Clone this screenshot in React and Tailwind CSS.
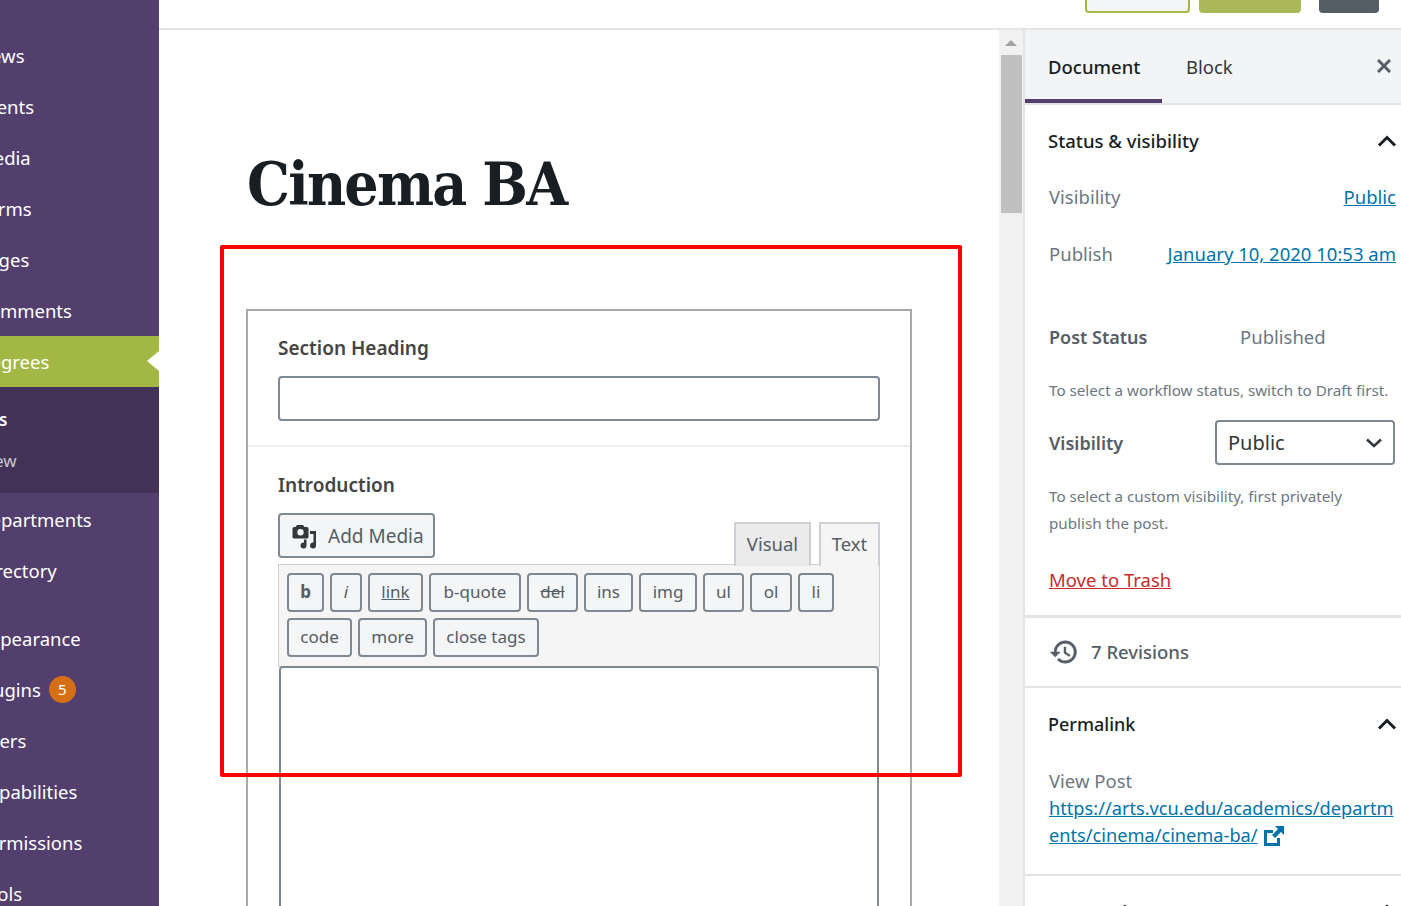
import React from 'react';

const menuTop = ['News', 'Events', 'Media', 'Forms', 'Pages', 'Comments'];
const menuMid = ['Departments', 'Directory'];
const menuBottom = ['Users', 'Capabilities', 'Permissions', 'Tools'];

const row1 = [
  { label: 'b', w: 'w-[37px]', cls: 'font-bold' },
  { label: 'i', w: 'w-[32px]', cls: 'italic' },
  { label: 'link', w: 'w-[55px]', cls: 'underline' },
  { label: 'b-quote', w: 'w-[92px]', cls: '' },
  { label: 'del', w: 'w-[51px]', cls: 'line-through' },
  { label: 'ins', w: 'w-[49px]', cls: '' },
  { label: 'img', w: 'w-[58px]', cls: '' },
  { label: 'ul', w: 'w-[41px]', cls: '' },
  { label: 'ol', w: 'w-[42px]', cls: '' },
  { label: 'li', w: 'w-[36px]', cls: '' },
];
const row2 = [
  { label: 'code', w: 'w-[65px]', cls: '' },
  { label: 'more', w: 'w-[69px]', cls: '' },
  { label: 'close tags', w: 'w-[106px]', cls: '' },
];

const MenuItem = ({ label, children }) => (
  <div className="h-[51px] flex items-center -ml-[23px] text-white text-[18.5px] whitespace-nowrap">
    {label}
    {children}
  </div>
);

const QtButton = ({ label, w, cls }) => (
  <button className={`${w} h-[39px] pb-[1px] border-2 border-[#7e8993] rounded-[4px] bg-[#f3f5f6] text-[17px] text-[#555d66] flex items-center justify-center ${cls}`}>
    {label}
  </button>
);

const Chevron = () => (
  <svg width="20" height="12" viewBox="0 0 20 12" fill="none" stroke="#191e23" strokeWidth="3">
    <path d="M2 10.5 L10 2.5 L18 10.5" />
  </svg>
);

export default function App() {
  return (
    <div className="w-[1401px] h-[906px] overflow-hidden relative flex bg-white font-['Noto_Sans','Open_Sans',sans-serif]">
      {/* admin menu */}
      <aside className="w-[159px] shrink-0 bg-[#523f6d] overflow-hidden pt-[30px]">
        {menuTop.map((m) => <MenuItem key={m} label={m} />)}
        <div className="relative h-[51px] bg-[#a3b745] flex items-center text-white text-[18.5px] whitespace-nowrap">
          <span className="-ml-[23px]">Degrees</span>
          <span className="absolute right-0 top-[15px] border-y-[10px] border-r-[12px] border-y-transparent border-r-white" />
        </div>
        <div className="h-[106px] bg-[#413256] pt-[19px] text-[17px] whitespace-nowrap">
          <div className="-ml-[61px] h-[28px] leading-[28px] font-semibold text-white">Degrees</div>
          <div className="-ml-[55px] mt-[13px] h-[28px] leading-[28px] text-[#cbc5d3]">Add New</div>
        </div>
        <div className="pt-[1px]">
          {menuMid.map((m) => <MenuItem key={m} label={m} />)}
        </div>
        <div className="pt-[17px]">
          <MenuItem label="Appearance" />
          <MenuItem label="Plugins">
            <span className="ml-[8px] w-[27px] h-[27px] rounded-full bg-[#d46f15] text-[15px] flex items-center justify-center">5</span>
          </MenuItem>
          {menuBottom.map((m) => <MenuItem key={m} label={m} />)}
        </div>
      </aside>

      <div className="flex-1 min-w-0 flex flex-col">
        {/* top bar */}
        <header className="h-[30px] shrink-0 border-b-2 border-[#e2e4e7] flex justify-end items-start pr-[22px]">
          <div className="-mt-[10px] w-[105px] h-[23px] border-2 border-[#a3b745] rounded-[4px] bg-[#f3f5f6]" />
          <div className="-mt-[10px] ml-[9px] w-[102px] h-[23px] rounded-[4px] bg-[#a9b758]" />
          <div className="-mt-[10px] ml-[18px] w-[60px] h-[23px] rounded-[4px] bg-[#555d66]" />
        </header>

        <div className="flex-1 min-h-0 flex">
          {/* editor */}
          <main className="w-[840px] shrink-0 overflow-hidden pl-[87px]">
            <h1 className="ml-[1px] mt-[118px] h-[72px] leading-[72px] text-[60px] font-bold text-[#191e23] tracking-[-1.8px] font-['DejaVu_Serif_Condensed','DejaVu_Serif',serif] whitespace-nowrap">
              Cinema BA
            </h1>
            <div className="mt-[89px] w-[666px] h-[700px] border-2 border-[#a8aba7] border-b-0">
              <div className="h-[136px] border-b-2 border-[#eeeeee] px-[30px] pt-[22px]">
                <label className="block h-[30px] leading-[30px] text-[19px] font-semibold text-[#444444]">Section Heading</label>
                <div className="mt-[13px] h-[45px] border-2 border-[#7e8993] rounded-[4px]" />
              </div>
              <div className="px-[30px] pt-[23px]">
                <label className="block h-[30px] leading-[30px] text-[19px] font-semibold text-[#444444]">Introduction</label>
                <div className="mt-[13px] h-[51px] flex justify-between items-start">
                  <button className="w-[157px] h-[45px] border-2 border-[#7e8993] rounded-[4px] bg-[#f3f5f6] flex items-center pl-[11px] gap-[11px] text-[19px] text-[#555d66]">
                    <svg width="26" height="26" viewBox="0 0 26 26" fill="#32373c">
                      <path d="M6 2h6l1.5 2H16a1.5 1.5 0 0 1 1.5 1.5V14a1.5 1.5 0 0 1-1.500 1.500H3A1.500 1.500 0 0 1 1.500 14V5.500A1.500 1.500 0 0 1 3 4h1.500zM9.500 6a3.200 3.200 0 1 0 0 6.400 3.200 3.200 0 0 0 0-6.400z" />
                      <path d="M19 8h6v14.500a3 3 0 1 1-2.500-3V11H19z" />
                      <path d="M15.500 16.500v6a3 3 0 1 1-2.500-3v-3z" />
                    </svg>
                    <span className="pt-[1px]">Add Media</span>
                  </button>
                  <div className="flex gap-[8px] pt-[9px] -mb-[2px] relative z-10 text-[18.5px] text-[#555d66]">
                    <div className="w-[77px] h-[44px] pb-[2px] border-2 border-b-0 border-[#ccd0d4] bg-[#ebebeb] flex items-center justify-center">Visual</div>
                    <div className="w-[61px] h-[44px] pb-[2px] border-2 border-b-0 border-[#ccd0d4] bg-[#f5f5f5] flex items-center justify-center">Text</div>
                  </div>
                </div>
                <div className="h-[103px] border border-[#ccd0d4] bg-[#f5f5f5] pl-[8px] pt-[8px] flex flex-col gap-[6px]">
                  <div className="flex gap-[6px]">{row1.map((b) => <QtButton key={b.label} {...b} />)}</div>
                  <div className="flex gap-[6px]">{row2.map((b) => <QtButton key={b.label} {...b} />)}</div>
                </div>
                <div className="mx-[1px] -mt-[1px] h-[400px] border-2 border-[#7e8993] rounded-[4px] bg-white relative" />
              </div>
            </div>
          </main>

          {/* scrollbar */}
          <div className="w-[26px] shrink-0 border-r-2 border-[#e2e4e7] bg-[#f1f1f1] pl-[2px]">
            <div className="h-[25px] flex justify-center items-center pr-[2px]">
              <div className="border-x-[6px] border-b-[6px] border-x-transparent border-b-[#a3a3a3]" />
            </div>
            <div className="w-[21px] h-[158px] bg-[#c0c0c0]" />
          </div>

          {/* settings sidebar */}
          <aside className="flex-1 min-w-0 overflow-hidden text-[18.5px]">
            <div className="h-[75px] border-b-2 border-[#e2e4e7] bg-[#f3f4f5] flex items-start relative">
              <div className="w-[137px] h-[73px] border-b-4 border-[#533f6d] pl-[23px] pt-[21px] leading-[32px] font-medium text-[#191e23]">Document</div>
              <div className="ml-[24px] pt-[21px] leading-[32px] text-[#32373c]">Block</div>
              <svg className="absolute left-[352px] top-[29px]" width="14" height="14" viewBox="0 0 14 14" stroke="#555d66" strokeWidth="3">
                <path d="M1 1 L13 13 M13 1 L1 13" />
              </svg>
            </div>

            <section className="h-[513px] border-b-[3px] border-[#e2e4e7] pl-[23px] pr-[5px]">
              <div className="h-[72px] flex items-center justify-between font-medium text-[#191e23]">
                <span>Status &amp; visibility</span>
                <span className="-mr-[1px]"><Chevron /></span>
              </div>
              <div className="pl-[1px] h-[40px] flex items-center justify-between text-[#6c7781]">
                <span>Visibility</span>
                <a className="text-[#0073aa] underline">Public</a>
              </div>
              <div className="pl-[1px] mt-[17px] h-[40px] flex items-center justify-between text-[#6c7781]">
                <span>Publish</span>
                <a className="text-[#0073aa] underline">January 10, 2020 10:53 am</a>
              </div>
              <div className="pl-[1px] mt-[43px] h-[40px] flex items-center text-[#555d66]">
                <span className="w-[191px] text-[18px] font-semibold">Post Status</span>
                <span className="text-[#6c7781]">Published</span>
              </div>
              <p className="pl-[1px] mt-[19px] h-[28px] leading-[28px] text-[15.2px] text-[#6c7781] whitespace-nowrap">To select a workflow status, switch to Draft first.</p>
              <div className="pl-[1px] mt-[16px] h-[45px] flex items-center text-[#555d66]">
                <span className="w-[166px] pt-[1px] text-[18px] font-semibold">Visibility</span>
                <div className="w-[180px] h-[45px] border-2 border-[#7e8993] rounded-[4px] flex items-center justify-between pl-[11px] pr-[11px] text-[20px] text-[#32373c]">
                  Public
                  <svg width="16" height="10" viewBox="0 0 16 10" fill="none" stroke="#32373c" strokeWidth="2.500">
                    <path d="M1 1.500 L8 8 L15 1.500" />
                  </svg>
                </div>
              </div>
              <p className="pl-[1px] mt-[18px] leading-[27px] text-[15.2px] text-[#6c7781]">To select a custom visibility, first privately<br />publish the post.</p>
              <a className="block pl-[1px] mt-[29px] leading-[28px] text-[#c92c2c] underline">Move to Trash</a>
            </section>

            <section className="h-[70px] border-b-2 border-[#e2e4e7] pl-[24px] flex items-center gap-[12px] font-medium text-[#555d66]">
              <svg width="30" height="30" viewBox="0 0 24 24" fill="#555d66" stroke="#555d66" strokeWidth="0.4">
                <path d="M13 3a9 9 0 0 0-9 9H1l3.890 3.890.07.140L9 12H6c0-3.870 3.130-7 7-7s7 3.130 7 7-3.130 7-7 7c-1.930 0-3.680-.790-4.940-2.060l-1.420 1.420A8.954 8.954 0 0 0 13 21a9 9 0 0 0 0-18zm-1 5v5l4.280 2.540.720-1.210-3.500-2.080V8H12z" />
              </svg>
              7 Revisions
            </section>

            <section className="h-[188px] border-b-2 border-[#e2e4e7] pl-[23px] pr-[5px]">
              <div className="h-[72px] flex items-center justify-between text-[18px] font-medium text-[#191e23]">
                <span>Permalink</span>
                <span className="-mr-[1px]"><Chevron /></span>
              </div>
              <div className="pl-[1px] mt-[7px] leading-[28px] text-[#6c7781]">View Post</div>
              <a className="block pl-[1px] leading-[27px] text-[18.2px] text-[#0073aa] underline whitespace-nowrap">
                https://arts.vcu.edu/academics/departm<br />ents/cinema/cinema-ba/
                <svg className="inline-block ml-[6px] -mt-[3px]" width="20" height="20" viewBox="0 0 20 20" fill="#0073aa">
                  <path d="M0 4h9v3H3v10h10v-5h3v8H0z" />
                  <path d="M11 0h9v9l-3-3-6 6-3-3 6-6z" />
                </svg>
              </a>
            </section>

            <div className="pl-[23px] pr-[5px] pt-[22px] leading-[28px] font-medium text-[#191e23] flex justify-between">
              <span>Featured Image</span>
              <span className="-mr-[1px] mt-[6px]"><Chevron /></span>
            </div>
          </aside>
        </div>
      </div>

      {/* red annotation box */}
      <div className="absolute left-[220px] top-[245px] w-[742px] h-[532px] border-4 border-[#ff0000] rounded-[2px] pointer-events-none" />
    </div>
  );
}
